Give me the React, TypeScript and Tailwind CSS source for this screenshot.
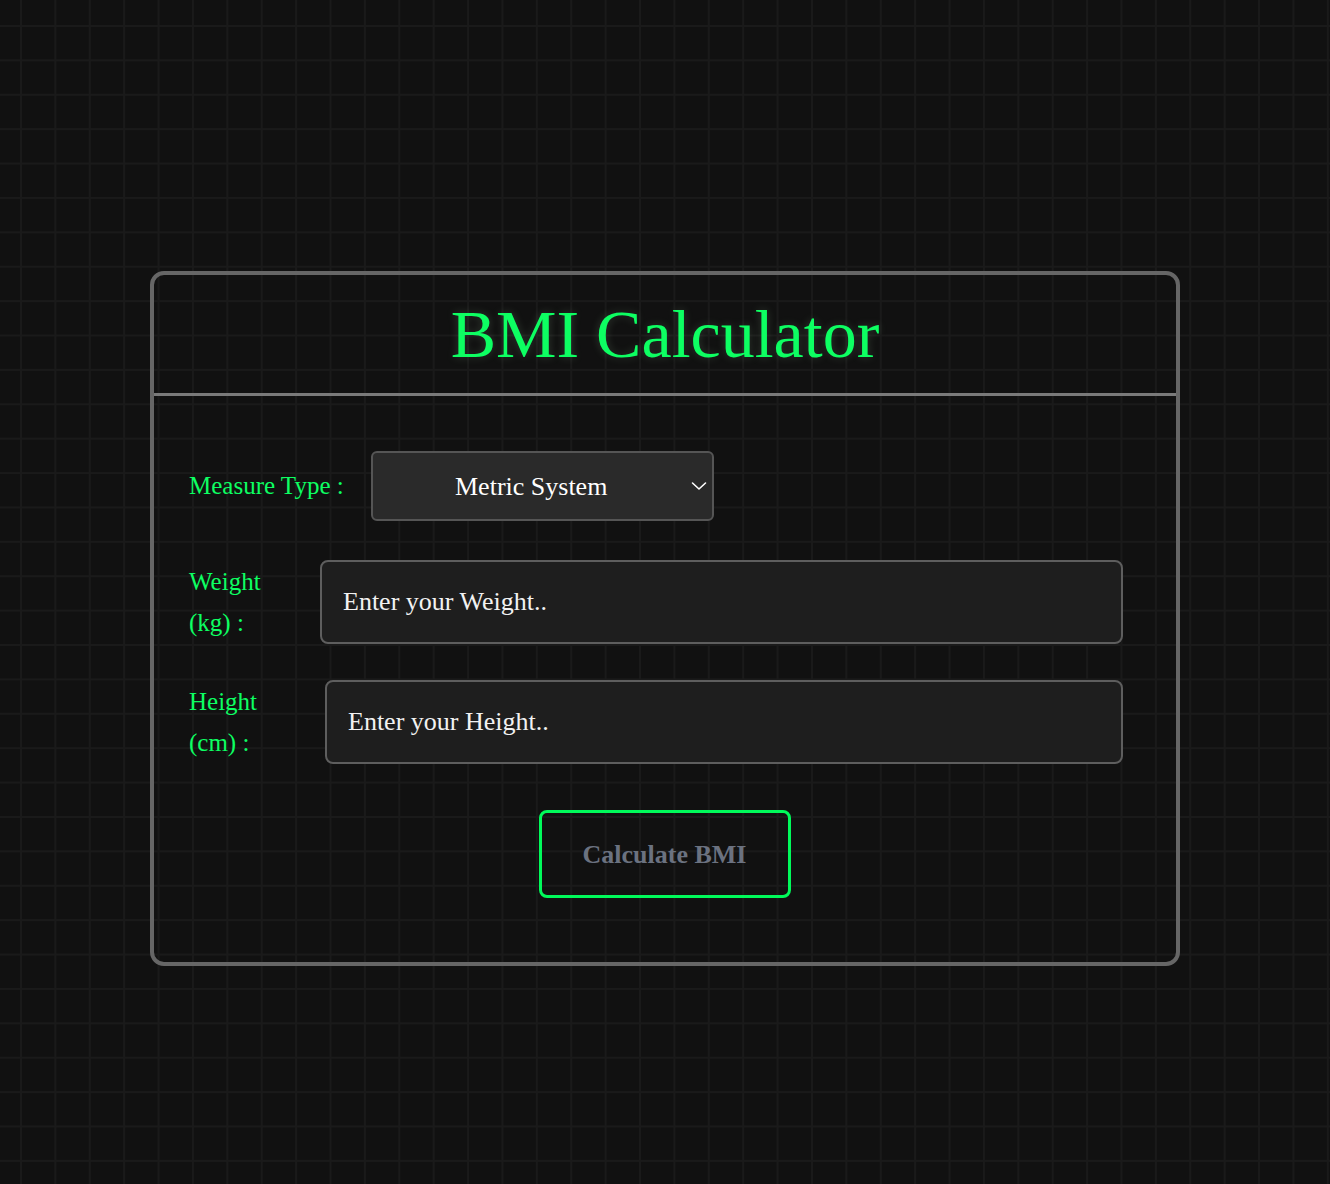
const serif = "font-['Liberation_Serif','Times_New_Roman',serif]"

const App = () => {
  return (
    <div
      className={`min-h-screen w-full bg-[#111111] bg-[linear-gradient(to_right,#1a1a1a_2px,transparent_2px),linear-gradient(to_bottom,#1a1a1a_2px,transparent_2px)] bg-[size:34.4px_34.4px] bg-[position:20px_25px] flex justify-center pt-[271px] ${serif}`}
    >
      <div className="w-[1030px] h-[695px] rounded-[14px] border-4 border-[#666666] flex flex-col">
        {/* Title */}
        <div className="h-[121px] flex items-center justify-center border-b-[3px] border-[#7a7a7a]">
          <h1 className="text-[68px] leading-none text-[#0dff62] [text-shadow:0_0_10px_rgba(200,255,200,0.18)]">
            BMI Calculator
          </h1>
        </div>

        {/* Form */}
        <div className="flex flex-col pl-[35px] pr-[53px] pt-[55px]">
          {/* Measure type */}
          <div className="flex items-center">
            <label className="text-[25px] text-[#0dff62]">Measure Type :</label>
            <div className="relative ml-[27px] w-[343px] h-[70px]">
              <select className="w-full h-full appearance-none rounded-[6px] border-2 border-[#555555] bg-[#2a2a2a] pr-[22px] text-[26px] text-white text-center [text-align-last:center] outline-none">
                <option>Metric System</option>
                <option>Imperial System</option>
              </select>
              <svg
                className="absolute right-[7px] top-1/2 -translate-y-1/2 pointer-events-none"
                width="16"
                height="9"
                viewBox="0 0 16 9"
                fill="none"
              >
                <path d="M1.5 1.5l6.5 6 6.5-6" stroke="white" strokeWidth="1.6" strokeLinecap="round" strokeLinejoin="round" />
              </svg>
            </div>
          </div>

          {/* Weight */}
          <div className="flex items-center mt-[39px]">
            <label className="w-[76px] shrink-0 text-[25px] leading-[41px] text-[#0dff62]">
              Weight (kg) :
            </label>
            <input
              type="text"
              placeholder="Enter your Weight.."
              className="ml-[55px] flex-1 h-[84px] rounded-[8px] border-2 border-[#5e5e5e] bg-[#1e1e1e] pl-[21px] text-[26px] text-white placeholder:text-[#f2f2f2] outline-none"
            />
          </div>

          {/* Height */}
          <div className="flex items-center mt-[36px]">
            <label className="w-[76px] shrink-0 text-[25px] leading-[41px] text-[#0dff62]">
              Height (cm) :
            </label>
            <input
              type="text"
              placeholder="Enter your Height.."
              className="ml-[60px] flex-1 h-[84px] rounded-[8px] border-2 border-[#5e5e5e] bg-[#1e1e1e] pl-[21px] text-[26px] text-white placeholder:text-[#f2f2f2] outline-none"
            />
          </div>

          {/* Button */}
          <div className="flex justify-center mt-[46px] pl-[17px]">
            <button className="w-[252px] h-[88px] rounded-[8px] border-[3px] border-[#00fa5a] text-[26px] font-bold text-[#6b7280]">
              Calculate BMI
            </button>
          </div>
        </div>
      </div>
    </div>
  )
}

export default App
